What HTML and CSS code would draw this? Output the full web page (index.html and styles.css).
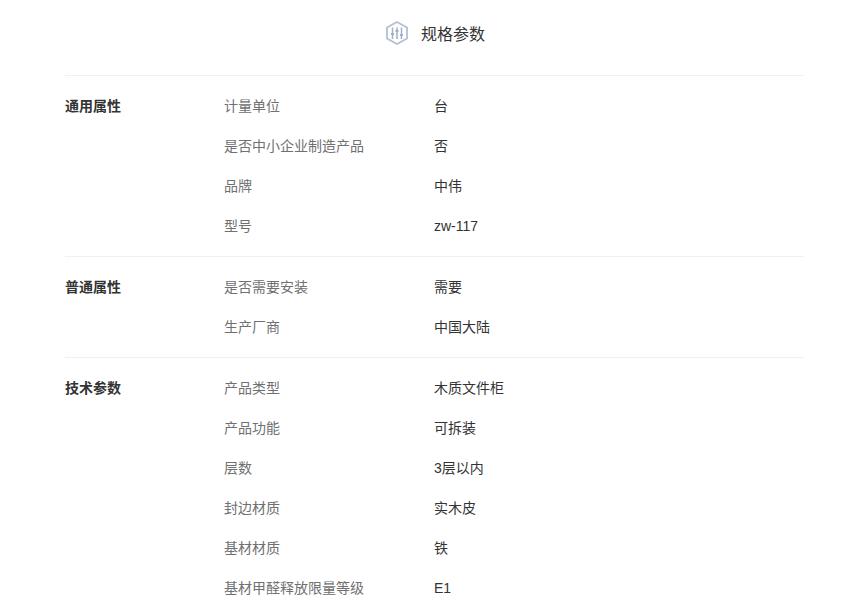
FILE: index.html
```
<!DOCTYPE html>
<html lang="zh-CN">
<head>
<meta charset="utf-8">
<title>规格参数</title>
<link rel="stylesheet" href="styles.css">
</head>
<body>
<main class="page">
  <h2 class="title">
    <svg class="title-icon" viewBox="0 0 22 24" width="22" height="24" fill="none">
      <path class="hex" d="M11 1 21 6.500V17.500L11 23 1 17.500V6.500Z"/>
      <path class="bars" d="M6.500 6.500V18M11 6.500V18M15.500 6.500V18"/>
      <path class="knobs" d="M5 13H8M9.500 10H12.500M14 14H17"/>
    </svg>
    <span>规格参数</span>
  </h2>
  <section class="group">
    <h3 class="group-name">通用属性</h3>
    <dl class="rows">
      <div class="row"><dt>计量单位</dt><dd>台</dd></div>
      <div class="row"><dt>是否中小企业制造产品</dt><dd>否</dd></div>
      <div class="row"><dt>品牌</dt><dd>中伟</dd></div>
      <div class="row"><dt>型号</dt><dd>zw-117</dd></div>
    </dl>
  </section>
  <section class="group">
    <h3 class="group-name">普通属性</h3>
    <dl class="rows">
      <div class="row"><dt>是否需要安装</dt><dd>需要</dd></div>
      <div class="row"><dt>生产厂商</dt><dd>中国大陆</dd></div>
    </dl>
  </section>
  <section class="group">
    <h3 class="group-name">技术参数</h3>
    <dl class="rows">
      <div class="row"><dt>产品类型</dt><dd>木质文件柜</dd></div>
      <div class="row"><dt>产品功能</dt><dd>可拆装</dd></div>
      <div class="row"><dt>层数</dt><dd>3层以内</dd></div>
      <div class="row"><dt>封边材质</dt><dd>实木皮</dd></div>
      <div class="row"><dt>基材材质</dt><dd>铁</dd></div>
      <div class="row"><dt>基材甲醛释放限量等级</dt><dd>E1</dd></div>
    </dl>
  </section>
</main>
</body>
</html>
```
FILE: styles.css
```
html, body {
  margin: 0;
  padding: 0;
  background: #fff;
  overflow: hidden;
  height: 606px;
}
body {
  font-family: "Liberation Sans", "Noto Sans CJK SC", sans-serif;
  font-size: 14px;
  color: #333;
}
.page {
  width: 739px;
  margin-left: 65px;
}
.title {
  display: flex;
  align-items: center;
  justify-content: center;
  gap: 13px;
  height: 75px;
  margin: 0;
  padding: 0 0 9px 2px;
  box-sizing: border-box;
  font-size: 16px;
  font-weight: 400;
  color: #333;
}
.title-icon { display: block; }
.hex { stroke: #b4bfd3; stroke-width: 1.8; }
.bars { stroke: #a3afc5; stroke-width: 1.5; }
.knobs { stroke: #a3afc5; stroke-width: 2; }
.group {
  display: flex;
  border-top: 1px solid #f0f0f0;
  padding: 10px 0;
}
.group-name {
  width: 159px;
  margin: 0;
  font-size: 14px;
  line-height: 40px;
  font-weight: 700;
  color: #333;
}
.rows { flex: 1; margin: 0; }
.row { display: flex; height: 40px; line-height: 40px; }
.row dt { width: 210px; color: #707070; }
.row dd { margin: 0; color: #333; }
```
